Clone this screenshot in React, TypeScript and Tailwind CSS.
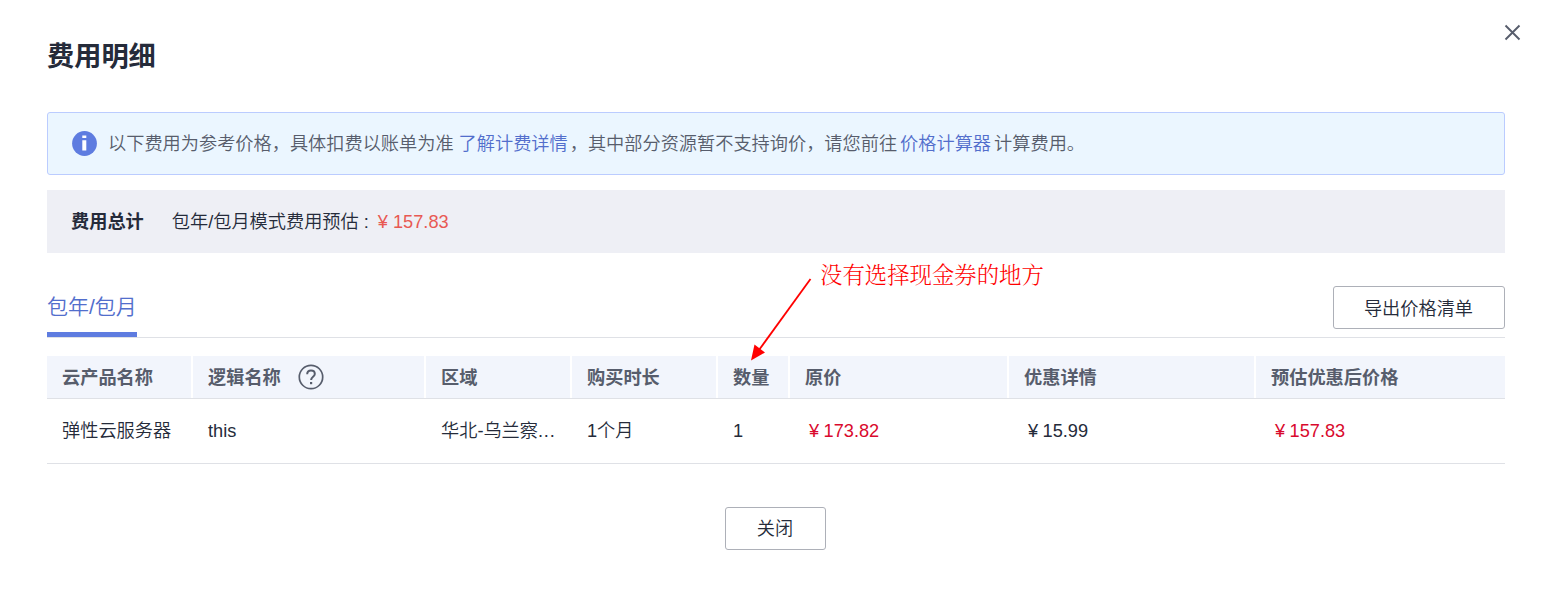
import type { ReactNode } from "react";

const columns = "grid grid-cols-[146px_233px_146px_146px_72px_219px_247px_1fr]";

function InfoIcon() {
  return (
    <svg className="size-[25px] shrink-0" viewBox="0 0 25 25">
      <circle cx="12.5" cy="12.5" r="12.4" fill="#5e7ce0" />
      <path d="M10.3 4.4h4v2.6h-4zM10.3 9.2h4v10.4h-4z" fill="#fff" />
    </svg>
  );
}

function HelpIcon() {
  return (
    <svg className="size-[26px] shrink-0" viewBox="0 0 26 26" fill="none" stroke="#575d6c">
      <circle cx="13" cy="13" r="11.7" strokeWidth="1.7" />
      <path d="M9.2 10.3c0-2.3 1.5-3.7 3.8-3.7s3.8 1.3 3.8 3.4c0 3-3.7 2.7-3.7 6.1" strokeWidth="2" />
      <path d="M12 18h2.2v2.2H12z" fill="#575d6c" stroke="none" />
    </svg>
  );
}

function HeadCell({ children, last = false }: { children: ReactNode; last?: boolean }) {
  return (
    <div className={last ? "flex items-center pt-[2px] pl-[15px]" : "flex items-center border-r-2 border-white pt-[2px] pl-[15px]"}>
      {children}
    </div>
  );
}

function Price({ children, className = "" }: { children: ReactNode; className?: string }) {
  return <span className={`pl-[19px] [word-spacing:-0.6px] ${className}`}>¥ {children}</span>;
}

export default function App() {
  return (
    <main className="relative h-[593px] w-[1550px] overflow-hidden bg-white pr-[45px] pl-[47px] font-['Liberation_Sans','Noto_Sans_CJK_SC',sans-serif] text-[18.2px] leading-[27px] font-[350] whitespace-nowrap text-[#252b3a]">
      <header className="flex h-[112px] items-start justify-between">
        <h1 className="mt-[37px] text-[27.2px] leading-[40px] font-bold">费用明细</h1>
        <button className="mt-[24px] -mr-[16px]" aria-label="关闭">
          <svg className="size-[17px]" viewBox="0 0 17 17" fill="none" stroke="#575d6c" strokeWidth="1.9">
            <path d="M1.5 1.5l14 14M15.5 1.5l-14 14" />
          </svg>
        </button>
      </header>

      <section className="flex h-[63px] items-center rounded-[3px] border border-[#bbccff] bg-[#ebf6ff] pl-[24px] text-[#575d6c]">
        <InfoIcon />
        <p className="mt-[2px] ml-[11px]">
          以下费用为参考价格，具体扣费以账单为准
          <a className="mr-[2px] ml-[5px] text-[#526ecc]">了解计费详情</a>
          ，其中部分资源暂不支持询价，请您前往
          <a className="mx-[3px] text-[#526ecc]">价格计算器</a>
          计算费用。
        </p>
      </section>

      <section className="mt-[15px] flex h-[63px] items-center bg-[#eeeff5] pt-px pl-[24px]">
        <strong>费用总计</strong>
        <span className="ml-[28px]">包年/包月模式费用预估 :</span>
        <span className="ml-[9px] text-[#e85953]">¥ 157.83</span>
      </section>

      <nav className="flex h-[85px] items-end justify-between border-b border-[#dfe1e6]">
        <div className="h-[48px] w-[90px] border-b-[5px] border-[#5e7ce0] text-[21px] leading-[36px] text-[#526ecc]">包年/包月</div>
        <button className="mb-[8px] h-[43px] w-[172px] rounded-[3px] border border-[#adb0b8] pt-[3px] pr-[1px]">导出价格清单</button>
      </nav>

      <section className="mt-[18px]">
        <div className={`${columns} h-[43px] border-b border-[#dfe1e6] bg-[#f2f5fc] font-bold text-[#575d6c]`}>
          <HeadCell>云产品名称</HeadCell>
          <HeadCell>
            逻辑名称
            <span className="mb-[3px] ml-[17px]">
              <HelpIcon />
            </span>
          </HeadCell>
          <HeadCell>区域</HeadCell>
          <HeadCell>购买时长</HeadCell>
          <HeadCell>数量</HeadCell>
          <HeadCell>原价</HeadCell>
          <HeadCell>优惠详情</HeadCell>
          <HeadCell last>预估优惠后价格</HeadCell>
        </div>
        <div className={`${columns} h-[65px] items-center border-b border-[#dfe1e6] pt-px`}>
          <span className="pl-[15px]">弹性云服务器</span>
          <span className="pl-[15px]">this</span>
          <span className="pl-[15px]">
            华北-乌兰察<span className="tracking-[0.8px]">...</span>
          </span>
          <span className="pl-[15px]">1个月</span>
          <span className="pl-[15px]">1</span>
          <Price className="text-[#d9092d]">173.82</Price>
          <Price>15.99</Price>
          <Price className="text-[#d9092d]">157.83</Price>
        </div>
      </section>

      <footer className="mt-[43px] flex justify-center pr-[2px]">
        <button className="h-[43px] w-[101px] rounded-[3px] border border-[#adb0b8] pt-[2px]">关闭</button>
      </footer>

      <div className="absolute top-[257px] left-[820px] font-['Noto_Serif_CJK_SC','Noto_Sans_CJK_SC',serif] text-[22.4px] leading-[32px] font-light text-[#ff0000]">
        没有选择现金券的地方
      </div>
      <svg className="absolute top-[275px] left-[745px] h-[100px] w-[70px]" viewBox="745 275 70 100" fill="#f00">
        <path d="M810.5 279L759 350" stroke="#f00" strokeWidth="1.8" />
        <path d="M751 360.500l3.500-16 10.500 8z" />
      </svg>
    </main>
  );
}
